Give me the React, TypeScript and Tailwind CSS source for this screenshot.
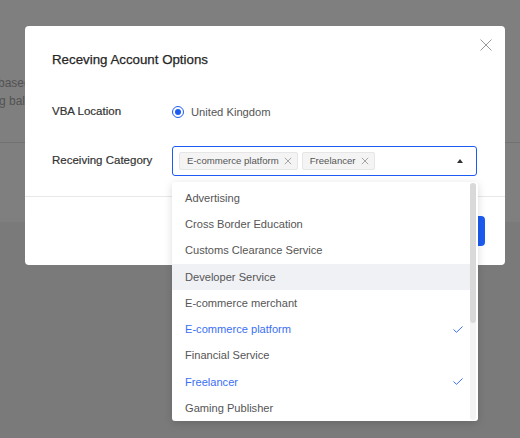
import React from "react";

const items: { label: string; selected?: boolean; hover?: boolean }[] = [
  { label: "Advertising" },
  { label: "Cross Border Education" },
  { label: "Customs Clearance Service" },
  { label: "Developer Service", hover: true },
  { label: "E-commerce merchant" },
  { label: "E-commerce platform", selected: true },
  { label: "Financial Service" },
  { label: "Freelancer", selected: true },
  { label: "Gaming Publisher" },
];

function SmallX({ size = 7, color = "#999" }: { size?: number; color?: string }) {
  return (
    <svg width={size} height={size} viewBox="0 0 10 10" fill="none">
      <path d="M1 1L9 9M9 1L1 9" stroke={color} strokeWidth="1.1" />
    </svg>
  );
}

function Tag({ text }: { text: string }) {
  return (
    <div className="flex h-[18px] items-center gap-[5px] rounded-[2px] border border-[#e6e6e6] bg-[#f4f4f5] pl-[7px] pr-[5px] text-[9.6px] text-[#555]">
      <span>{text}</span>
      <SmallX size={8} color="#9a9a9a" />
    </div>
  );
}

export default function App() {
  return (
    <div className="relative h-[438px] w-[520px] overflow-hidden bg-[#f4f4f4] font-['Liberation_Sans',Arial,sans-serif]">
      {/* background page */}
      <div className="h-[222px] bg-white">
        <div className="h-[143px] border-b border-[#e4e4e4] pt-[74px] text-[12px] leading-[18px] text-[#a6a6a6]">
          <div className="w-[25px] overflow-hidden">
            <div className="ml-[-2px] whitespace-nowrap">based</div>
            <div className="ml-[-1px] whitespace-nowrap">g bala</div>
          </div>
        </div>
      </div>

      {/* overlay */}
      <div className="absolute inset-0 bg-black/50" />

      {/* modal */}
      <div className="absolute left-[25px] top-[26px] w-[480px] rounded-[4px] bg-white">
        <button className="absolute left-[455px] top-[13px] flex h-[12px] w-[12px] items-center justify-center">
          <svg width="12" height="12" viewBox="0 0 12 12" fill="none">
            <path d="M0.5 0.5L11.5 11.5M11.5 0.5L0.5 11.5" stroke="#9a9a9a" strokeWidth="1" />
          </svg>
        </button>
        <div className="px-[27px] pt-[24px]">
          <div className="h-[20px] text-[13.3px] leading-[20px] text-[#262626] [-webkit-text-stroke:0.25px_#262626]">
            Receving Account Options
          </div>
          <div className="mt-[32px] flex h-[20px] items-center">
            <div className="w-[120px] text-[11.5px] text-[#333] [-webkit-text-stroke:0.2px_#333]">VBA Location</div>
            <div className="flex items-center gap-[7px]">
              <div className="flex h-[12px] w-[12px] items-center justify-center rounded-full border border-[#1d5cf2]">
                <div className="h-[6px] w-[6px] rounded-full bg-[#1d5cf2]" />
              </div>
              <span className="text-[11.2px] text-[#555]">United Kingdom</span>
            </div>
          </div>
          <div className="mt-[24px] flex h-[30px] items-center">
            <div className="w-[120px] text-[11.5px] text-[#333] [-webkit-text-stroke:0.2px_#333]">Receiving Category</div>
            <div className="flex h-[30px] w-[305px] items-center rounded-[3px] border border-[#1d5cf2] pl-[6px] pr-[13px]">
              <div className="flex flex-1 items-center gap-[4px]">
                <Tag text="E-commerce platform" />
                <Tag text="Freelancer" />
              </div>
              <svg width="6" height="4" viewBox="0 0 6 4">
                <path d="M3 0L6 4H0Z" fill="#333" />
              </svg>
            </div>
          </div>
        </div>
        <div className="mt-[20px] border-t border-[#e8e8e8]" />
        <div className="flex justify-end gap-[8px] px-[20px] pb-[19px] pt-[19px]">
          <button className="h-[30px] w-[70px] rounded-[3px] border border-[#ddd] text-[12px] text-[#555]">Cancel</button>
          <button className="h-[30px] w-[70px] rounded-[4px] bg-[#1d5cf2] text-[12px] text-white">Confirm</button>
        </div>
      </div>

      {/* dropdown */}
      <div className="absolute left-[172px] top-[182px] flex h-[239px] w-[306px] overflow-hidden rounded-[3px] bg-white shadow-[0_2px_8px_rgba(0,0,0,0.15)]">
        <div className="flex-1 overflow-hidden pt-[3px]">
          {items.map((it) => (
            <div
              key={it.label}
              className={`flex h-[26.25px] items-center justify-between pl-[13px] pr-[7px] text-[11.1px] ${
                it.hover ? "bg-[#f0f1f5]" : ""
              } ${it.selected ? "text-[#3a6ff5]" : "text-[#555]"}`}
            >
              <span>{it.label}</span>
              {it.selected && (
                <svg width="10" height="7" viewBox="0 0 10 7" fill="none">
                  <path d="M0.5 3.5L3.5 6.3L9.5 0.5" stroke="#3a6ff5" strokeWidth="1" />
                </svg>
              )}
            </div>
          ))}
        </div>
        <div className="mr-[2px] mt-[1px] mb-[1px] w-[6px] rounded-[3px] bg-[#f3f3f3]">
          <div className="h-[140px] w-[6px] rounded-[3px] bg-[#d9d9d9]" />
        </div>
      </div>
    </div>
  );
}
